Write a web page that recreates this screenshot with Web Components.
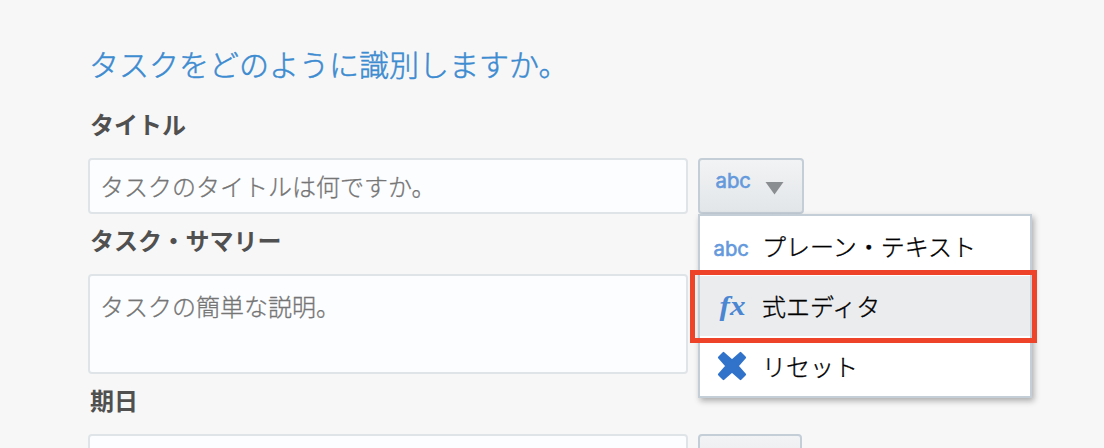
<!DOCTYPE html>
<html lang="ja">
<head>
<meta charset="utf-8">
<title>タスク</title>
<style>
body{margin:0;width:1104px;height:448px;overflow:hidden;background:#f7f7f7;font-family:"Noto Sans CJK JP","Liberation Sans",sans-serif;font-size:24px;font-weight:300}
</style>
</head>
<body>
<task-form></task-form>
<script>
const define = (name, html) => customElements.define(name, class extends HTMLElement {
  constructor() {
    super();
    const t = document.createElement('template');
    t.innerHTML = html;
    this.attachShadow({mode: 'open'}).append(t.content.cloneNode(true));
  }
});

define('abc-icon', `<style>:host{display:block;width:40px;height:30px}svg{display:block}text{font:400 20.5px "Inter","Liberation Sans",sans-serif;fill:#6499dc;stroke:#6499dc;stroke-width:.6px}</style>
<svg width="40" height="30"><text x="0.5" y="22" textLength="35.5" lengthAdjust="spacingAndGlyphs">abc</text></svg>`);

define('fx-icon', `<style>:host{display:block;width:38px;height:40px}svg{display:block}text{font:italic 700 27px "Liberation Serif",serif;fill:#4a86d2;-webkit-text-stroke:0}</style>
<svg width="38" height="40"><text x="4.5" y="27" textLength="26" lengthAdjust="spacingAndGlyphs">fx</text></svg>`);

define('reset-icon', `<style>:host{display:block;width:30px;height:30px}svg{display:block}</style>
<svg width="30" height="30"><path d="M6.5 2L15 9.5L23.5 2L28 6.5L20.5 15L28 23.5L23.5 28L15 20.5L6.5 28L2 23.5L9.5 15L2 6.5Z" fill="#3173ca" stroke="#3173ca" stroke-width="2.2" stroke-linejoin="round"/></svg>`);

define('field-label', `<style>:host{display:block;height:60px;line-height:52px;padding-left:2px;box-sizing:border-box;font-weight:700;color:#505050}</style><slot></slot>`);

define('text-field', `<style>:host{display:block;box-sizing:border-box;width:600px;height:56px;border:2px solid #dfe4e8;border-radius:4px;background:#fcfdff;color:#757575;padding-left:10px;line-height:52px;-webkit-text-stroke:.3px}:host([multiline]){height:100px;line-height:60px}</style><slot></slot>`);

define('type-button', `<style>:host{display:flex;box-sizing:border-box;width:106px;height:56px;border:2px solid #c4ced7;border-radius:4px;background:linear-gradient(#f2f3f4,#e2e6e9);padding:6px 0 0 15px;gap:10px}:host([narrow]){width:104px}svg{display:block;margin-top:16px}</style>
<slot></slot><svg width="20" height="13"><path d="M.5 0H18.5L9.5 12.5Z" fill="#8b8e91"/></svg>`);

define('menu-item', `<style>:host{display:flex;align-items:center;height:60px;color:#000;padding-left:14px;box-sizing:border-box}:host([active]){background:#ebecee}.icon{width:48px;height:30px}.text{line-height:58px;-webkit-text-stroke:.35px}::slotted(abc-icon){margin:3px 0 0 -1px}::slotted(fx-icon){margin:-3px 0 0 1px}::slotted(reset-icon){margin-left:3px}</style>
<div class="icon"><slot name="icon"></slot></div><div class="text"><slot></slot></div>`);

define('drop-menu', `<style>:host{display:block;box-sizing:border-box;width:334px;height:184px;border:2px solid #c4ced7;background:#fff;box-shadow:2px 3px 6px rgba(0,0,0,.3)}</style><slot></slot>`);

define('focus-frame', `<style>:host{display:block;box-sizing:border-box;width:347px;height:73px;border:5px solid #ee4328}</style>`);

define('task-form', `<style>
:host{display:block;box-sizing:border-box;height:448px;overflow:hidden;padding:38px 0 0 88px}
h1{margin:0;height:60px;padding-left:1px;font-size:30px;font-weight:300;line-height:50px;color:#3d8bd0;-webkit-text-stroke:.5px}
.row{display:flex;gap:10px}
.last{height:14px;overflow:hidden}
.picker{position:relative}
drop-menu{position:absolute;left:0;top:56px;z-index:2}
focus-frame{position:absolute;left:-8px;top:112px;z-index:3}
</style>
<h1>タスクをどのように識別しますか。</h1>
<field-label>タイトル</field-label>
<div class="row">
  <text-field>タスクのタイトルは何ですか。</text-field>
  <div class="picker">
    <type-button><abc-icon></abc-icon></type-button>
    <drop-menu>
      <menu-item><abc-icon slot="icon"></abc-icon>プレーン・テキスト</menu-item>
      <menu-item active><fx-icon slot="icon"></fx-icon>式エディタ</menu-item>
      <menu-item><reset-icon slot="icon"></reset-icon>リセット</menu-item>
    </drop-menu>
    <focus-frame></focus-frame>
  </div>
</div>
<field-label>タスク・サマリー</field-label>
<text-field multiline>タスクの簡単な説明。</text-field>
<field-label>期日</field-label>
<div class="row last"><text-field></text-field><type-button narrow></type-button></div>`);
</script>
</body>
</html>
